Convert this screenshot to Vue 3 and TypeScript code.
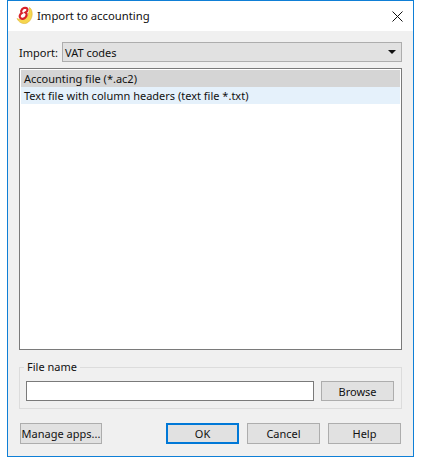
<template>
  <div class="window">
    <header class="titlebar">
      <svg class="logo" width="18" height="19" viewBox="0 0 18 19">
        <path d="M1 12.500C2.500 16 6 18 9.500 17.500 14 16.500 17 11 16 6 15.700 4 15 2.500 13.500 1.500 13.500 6 12 11 8 13 5.500 14 3 13.500 1 12.500z" fill="#f6d64e" stroke="#dcb233" stroke-width=".6"/>
        <path d="M7.800 2c2-.5 3.700.2 3.700 1.800 0 1.100-.8 2.100-2 2.700 1 .6 1.400 1.600 1.100 2.800-.5 2-2.500 3.700-4.500 3.500-1.800-.2-2.700-1.700-2.300-3.300.3-1.100 1-1.900 2-2.500-.7-.6-.8-1.400-.5-2.300C5.700 3.400 6.600 2.400 7.800 2z" fill="none" stroke="#d8222a" stroke-width="2.200"/>
      </svg>
      <span class="title">Import to accounting</span>
      <svg class="close" width="11" height="11" viewBox="0 0 11 11">
        <path d="M.5 .5l10 10M10.500 .5l-10 10" stroke="#111" stroke-width="1" fill="none"/>
      </svg>
    </header>

    <main class="body">
      <div class="import-row">
        <label class="import-label">Import:</label>
        <div class="combo">
          <span>{{ importType }}</span>
          <i class="arrow"></i>
        </div>
      </div>

      <ul class="list">
        <li
          v-for="(item, i) in formats"
          :key="item"
          :class="{ current: i === 0, hover: i === 1 }"
        >{{ item }}</li>
      </ul>

      <fieldset class="group">
        <legend>File name</legend>
        <div class="file-row">
          <input class="file-input" type="text" />
          <button class="btn browse">Browse</button>
        </div>
      </fieldset>

      <footer class="actions">
        <button class="btn manage">Manage apps...</button>
        <div class="spacer"></div>
        <button class="btn primary">OK</button>
        <button class="btn">Cancel</button>
        <button class="btn">Help</button>
      </footer>
    </main>
  </div>
</template>

<script setup lang="ts">
const importType = "VAT codes";
const formats: string[] = [
  "Accounting file (*.ac2)",
  "Text file with column headers (text file *.txt)",
];
</script>

<style>
html, body {
  background: #fff;
}
</style>

<style scoped>
.window {
  box-sizing: border-box;
  width: 407px;
  height: 457px;
  margin-left: 7px;
  border: 1px solid #0f7fd6;
  background: #f0f0f0;
  display: flex;
  flex-direction: column;
  font-family: "Noto Sans", "Open Sans", sans-serif;
  font-size: 11px;
  color: #111;
}

.titlebar {
  height: 30px;
  background: #fff;
  display: flex;
  align-items: center;
  padding: 0 10px 2px 8px;
  box-sizing: border-box;
  flex: none;
}

.logo {
  flex: none;
  margin-top: 1px;
}

.title {
  margin-left: 3px;
  font-size: 11.300px;
  flex: 1;
}

.close {
  flex: none;
  margin-top: 2px;
}

.body {
  flex: 1;
  display: flex;
  flex-direction: column;
  padding: 11px;
}

.import-row {
  display: flex;
  align-items: center;
  height: 20px;
}

.import-label {
  width: 43px;
  flex: none;
}

.combo {
  box-sizing: border-box;
  flex: 1;
  height: 20px;
  background: #e1e1e1;
  border: 1px solid #adadad;
  display: flex;
  align-items: center;
  justify-content: space-between;
  padding: 0 4px 0 2px;
}

.arrow {
  width: 0;
  height: 0;
  border-left: 4px solid transparent;
  border-right: 4px solid transparent;
  border-top: 4px solid #111;
  margin-right: 1px;
}

.list {
  box-sizing: border-box;
  list-style: none;
  margin: 6px 0 0;
  padding: 1px;
  height: 282px;
  background: #fff;
  border: 1px solid #7a7a7a;
  flex: none;
}

.list li {
  height: 17px;
  line-height: 17px;
  padding-left: 3px;
}

.list li.current {
  background: #d5d5d5;
}

.list li.hover {
  background: #e5f1fb;
}

.group {
  box-sizing: border-box;
  margin: 10px 0 0;
  padding: 0 7px 0 6px;
  height: 49px;
  border: 1px solid #dcdcdc;
  min-width: 0;
  flex: none;
}

.group legend {
  padding: 0 3px;
  margin-left: -2px;
  line-height: 14px;
}

.file-row {
  display: flex;
  gap: 7px;
  margin-top: 7px;
}

.file-input {
  box-sizing: border-box;
  flex: 1;
  min-width: 0;
  height: 20px;
  margin: 0;
  padding: 0 2px;
  background: #fff;
  border: 1px solid #7a7a7a;
  outline: none;
}

.btn {
  box-sizing: border-box;
  width: 73px;
  height: 21px;
  padding: 0;
  background: #e1e1e1;
  border: 1px solid #adadad;
  font: inherit;
  color: inherit;
  white-space: nowrap;
  flex: none;
}

.browse {
  height: 20px;
}

.actions {
  display: flex;
  gap: 8px;
  margin-top: 14px;
  padding: 0 1px;
}

.manage {
  width: 82px;
}

.spacer {
  flex: 1;
}

.primary {
  border: 2px solid #0078d7;
}
</style>
